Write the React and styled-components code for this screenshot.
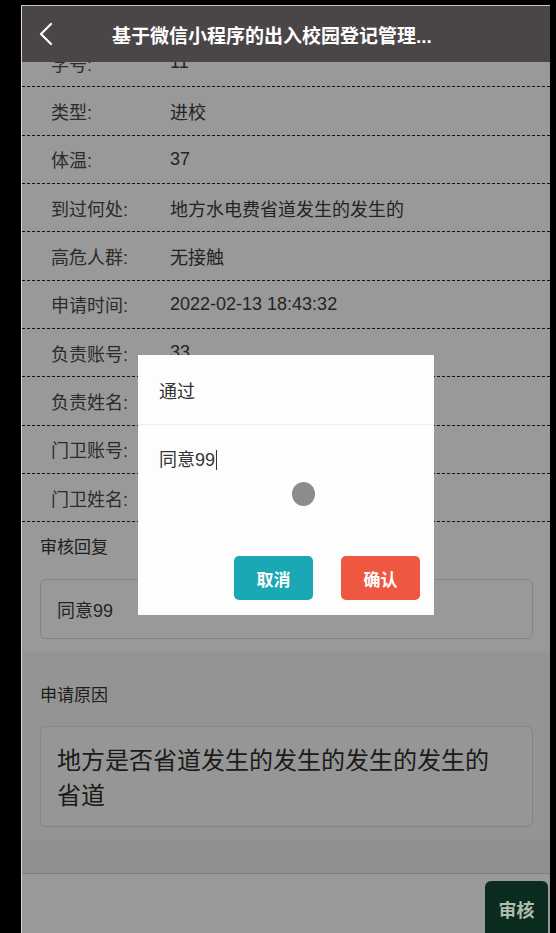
import styled, { createGlobalStyle } from "styled-components";

const GlobalStyle = createGlobalStyle`
  html, body {
    margin: 0;
    padding: 0;
    background: #000;
  }
  body {
    font-family: "Liberation Sans", "Noto Sans CJK SC", sans-serif;
    color: #333;
  }
  * { box-sizing: border-box; }
`;

const info = [
  { label: "学号", value: "11" },
  { label: "类型", value: "进校" },
  { label: "体温", value: "37" },
  { label: "到过何处", value: "地方水电费省道发生的发生的" },
  { label: "高危人群", value: "无接触" },
  { label: "申请时间", value: "2022-02-13 18:43:32" },
  { label: "负责账号", value: "33" },
  { label: "负责姓名", value: "张三" },
  { label: "门卫账号", value: "22" },
  { label: "门卫姓名", value: "李四" },
];

const App = () => {
  return (
    <Screen>
      <GlobalStyle />
      <Phone>
        <NavBar>
          <BackButton>
            <svg width="16" height="24" viewBox="0 0 16 24" fill="none">
              <path d="M13 2 L3 12 L13 22" stroke="#fff" strokeWidth="2.2" strokeLinecap="round" strokeLinejoin="round" />
            </svg>
          </BackButton>
          <NavTitle>基于微信小程序的出入校园登记管理...</NavTitle>
        </NavBar>

        <PageBody>
          <Scroll>
            <Content>
              <InfoList>
                {info.map(({ label, value }) => (
                  <InfoRow key={label}>
                    <InfoLabel>{label}:</InfoLabel>
                    <InfoValue>{value}</InfoValue>
                  </InfoRow>
                ))}
              </InfoList>

              <ReplySection>
                <SectionTitle>审核回复</SectionTitle>
                <ReplyBox>同意99</ReplyBox>
              </ReplySection>

              <ReasonSection>
                <SectionTitle>申请原因</SectionTitle>
                <ReasonBox>地方是否省道发生的发生的发生的发生的省道</ReasonBox>
              </ReasonSection>
            </Content>
          </Scroll>

          <Footer>
            <AuditButton>审核</AuditButton>
          </Footer>

          <Mask />
          <Dialog>
            <DialogTitle>通过</DialogTitle>
            <DialogBody>
              <DialogInput>
                同意99<Caret />
              </DialogInput>
              <TouchDot />
            </DialogBody>
            <DialogActions>
              <DialogButton $tone="cancel">取消</DialogButton>
              <DialogButton $tone="confirm">确认</DialogButton>
            </DialogActions>
          </Dialog>
        </PageBody>
      </Phone>
    </Screen>
  );
};

export default App;

const Screen = styled.div`
  width: 556px;
  height: 933px;
  padding: 5px 6px 0 21px;
  background: #000;
  overflow: hidden;
`;

const Phone = styled.div`
  width: 529px;
  height: 928px;
  display: flex;
  flex-direction: column;
  border-left: 1px solid #d6d6d6;
  border-top: 1px solid #c9c9c9;
  background: #eee;
  overflow: hidden;
`;

const NavBar = styled.div`
  position: relative;
  z-index: 4;
  height: 56px;
  flex: none;
  display: flex;
  align-items: center;
  background: #4a4647;
  color: #fff;
`;

const BackButton = styled.div`
  width: 90px;
  padding-left: 16px;
  display: flex;
  align-items: center;
  height: 100%;
`;

const NavTitle = styled.div`
  font-family: "Liberation Sans", "Noto Sans CJK SC", sans-serif;
  font-size: 19px;
  font-weight: 700;
  white-space: nowrap;
`;

const PageBody = styled.div`
  position: relative;
  flex: 1;
  display: flex;
  flex-direction: column;
  min-height: 0;
`;

const Scroll = styled.div`
  flex: 1;
  overflow: hidden;
  background: #eee;
`;

const Content = styled.div`
  margin-top: -23px;
`;

const InfoList = styled.div`
  background: #fff;
`;

const InfoRow = styled.div`
  height: 48.33px;
  display: flex;
  align-items: center;
  padding-left: 29px;
  border-bottom: 1px dashed #222;
  font-size: 18px;
`;

const InfoLabel = styled.span`
  width: 119px;
  flex: none;
  color: #4a4a4a;
`;

const InfoValue = styled.span`
  color: #3c3c3c;
`;

const SectionTitle = styled.div`
  font-size: 17px;
  line-height: 18px;
  color: #333;
`;

const ReplySection = styled.div`
  background: #fff;
  padding: 17px 17px 13px 18px;
  display: flex;
  flex-direction: column;
  gap: 22px;
`;

const ReplyBox = styled.div`
  height: 60px;
  display: flex;
  align-items: center;
  padding-left: 16px;
  border: 1px solid #dcdcdc;
  border-radius: 6px;
  font-size: 18px;
  color: #3c3c3c;
`;

const ReasonSection = styled.div`
  background: #f7f7f7;
  padding: 35px 17px 13px 18px;
  display: flex;
  flex-direction: column;
  gap: 21px;
`;

const ReasonBox = styled.div`
  height: 101px;
  padding: 14px 24px 16px 16px;
  border: 1px solid #dcdcdc;
  border-radius: 6px;
  background: #fafafa;
  font-family: "Noto Sans CJK SC", sans-serif;
  font-size: 24px;
  line-height: 35px;
  color: #2e2e2e;
`;

const Footer = styled.div`
  flex: none;
  height: 60px;
  border-top: 1px solid #d4d4d4;
  background: #fff;
  display: flex;
  justify-content: flex-end;
  align-items: flex-end;
  padding-right: 2px;
`;

const AuditButton = styled.div`
  position: relative;
  z-index: 3;
  width: 63px;
  height: 52px;
  border-radius: 6px 6px 0 0;
  background: #0c2b1f;
  color: #aebdad;
  font-size: 18px;
  font-weight: 700;
  display: flex;
  align-items: center;
  justify-content: center;
  padding-top: 4px;
`;

const Mask = styled.div`
  position: absolute;
  inset: 0;
  z-index: 2;
  background: rgba(0, 0, 0, 0.4);
`;

const Dialog = styled.div`
  position: absolute;
  z-index: 5;
  top: 293px;
  left: 116px;
  width: 296px;
  height: 260px;
  background: #fdfdfd;
  display: flex;
  flex-direction: column;
`;

const DialogTitle = styled.div`
  height: 70px;
  flex: none;
  display: flex;
  align-items: center;
  padding-left: 21px;
  border-bottom: 1px solid #f0f0f0;
  font-size: 18px;
  color: #333;
`;

const DialogBody = styled.div`
  position: relative;
  flex: 1;
  padding: 24px 21px 0;
`;

const DialogInput = styled.div`
  display: flex;
  align-items: center;
  font-size: 18px;
  line-height: 22px;
  color: #333;
`;

const Caret = styled.span`
  display: inline-block;
  width: 1px;
  height: 20px;
  margin-left: 1px;
  background: #333;
`;

const TouchDot = styled.span`
  position: absolute;
  left: 154px;
  top: 57px;
  width: 23px;
  height: 24px;
  border-radius: 50%;
  background: #8c8c8c;
`;

const DialogActions = styled.div`
  display: flex;
  justify-content: flex-end;
  gap: 28px;
  padding: 0 14px 15px 0;
`;

const DialogButton = styled.div`
  width: 79px;
  height: 44px;
  border-radius: 5px;
  display: flex;
  align-items: center;
  justify-content: center;
  font-size: 17px;
  font-weight: 700;
  color: #fff;
  background: ${({ $tone }) => ($tone === "confirm" ? "#ef5840" : "#1aa8b4")};
`;
